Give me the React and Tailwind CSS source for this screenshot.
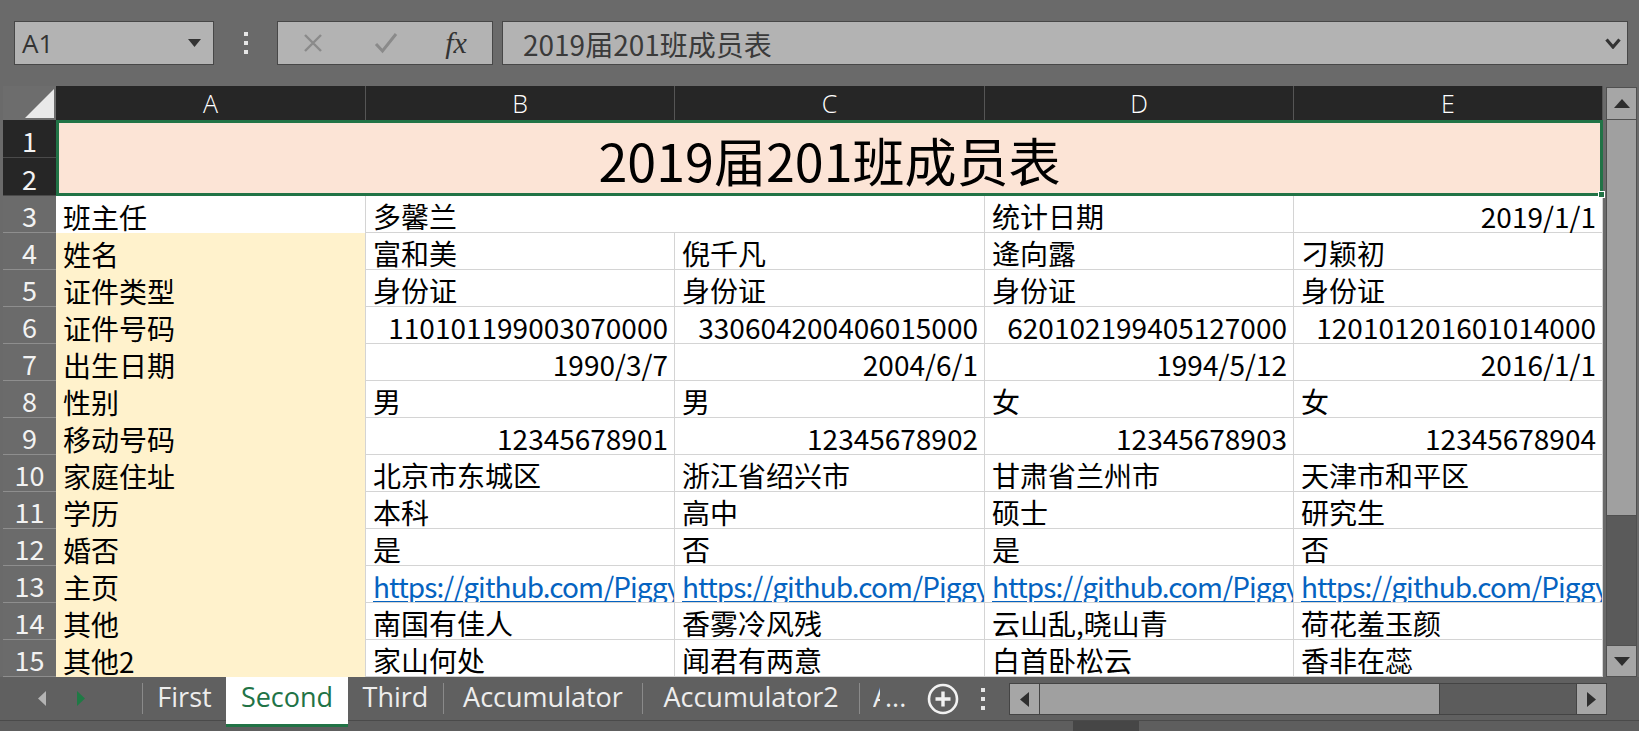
import React from "react";

const cols = ["A", "B", "C", "D", "E"];

const body = [
  { n: 4, label: "姓名", kind: "text", cells: ["富和美", "倪千凡", "逄向露", "刁颖初"] },
  { n: 5, label: "证件类型", kind: "text", cells: ["身份证", "身份证", "身份证", "身份证"] },
  {
    n: 6,
    label: "证件号码",
    kind: "num",
    cells: ["110101199003070000", "330604200406015000", "620102199405127000", "120101201601014000"],
  },
  { n: 7, label: "出生日期", kind: "num", cells: ["1990/3/7", "2004/6/1", "1994/5/12", "2016/1/1"] },
  { n: 8, label: "性别", kind: "text", cells: ["男", "男", "女", "女"] },
  {
    n: 9,
    label: "移动号码",
    kind: "num",
    cells: ["12345678901", "12345678902", "12345678903", "12345678904"],
  },
  {
    n: 10,
    label: "家庭住址",
    kind: "text",
    cells: ["北京市东城区", "浙江省绍兴市", "甘肃省兰州市", "天津市和平区"],
  },
  { n: 11, label: "学历", kind: "text", cells: ["本科", "高中", "硕士", "研究生"] },
  { n: 12, label: "婚否", kind: "text", cells: ["是", "否", "是", "否"] },
  {
    n: 13,
    label: "主页",
    kind: "link",
    cells: [
      "https://github.com/Piggy",
      "https://github.com/Piggy",
      "https://github.com/Piggy",
      "https://github.com/Piggy",
    ],
  },
  { n: 14, label: "其他", kind: "text", cells: ["南国有佳人", "香雾冷风残", "云山乱,晓山青", "荷花羞玉颜"] },
  { n: 15, label: "其他2", kind: "text", cells: ["家山何处", "闻君有两意", "白首卧松云", "香非在蕊"] },
];

function RowHead({ n, dark }) {
  return (
    <div
      className={
        dark
          ? "flex items-center justify-center pt-[3px] bg-[#262626] border-b border-[#4a4a4a] text-[27px] leading-none text-[#f2f2f2]"
          : "flex items-center justify-center pt-[3px] bg-[#6b6b6b] border-b border-[#8e8e8e] text-[27px] leading-none text-[#f2f2f2]"
      }
    >
      {n}
    </div>
  );
}

function Cell({ kind, children }) {
  if (kind === "num") {
    return (
      <div className="flex items-center justify-end pt-[4px] px-[6px] whitespace-nowrap bg-white border-r border-b border-[#d4d4d4] text-[28px] leading-none text-black">
        {children}
      </div>
    );
  }
  if (kind === "link") {
    return (
      <div className="flex items-center pt-[4px] pl-[7px] overflow-hidden whitespace-nowrap bg-white border-r border-b border-[#d4d4d4] text-[28px] leading-none tracking-[-0.9px] text-[#0563c1] underline underline-offset-[3px] decoration-[1.5px]">
        {children}
      </div>
    );
  }
  return (
    <div className="flex items-center pt-[4px] pl-[7px] whitespace-nowrap bg-white border-r border-b border-[#d4d4d4] text-[28px] leading-none text-black">
      {children}
    </div>
  );
}

function LabelCell({ white, children }) {
  return (
    <div
      className={
        white
          ? "flex items-center pt-[4px] pl-[7px] whitespace-nowrap bg-white border-r border-[#d4d4d4] text-[28px] leading-none text-black"
          : "flex items-center pt-[4px] pl-[7px] whitespace-nowrap bg-[#fff2cc] border-r border-[#d4d4d4] text-[28px] leading-none text-black"
      }
    >
      {children}
    </div>
  );
}

function Tab({ w, active, children }) {
  if (active) {
    return (
      <div
        className="relative z-10 shrink-0 h-[50px] bg-white border-b-[3px] border-[#217346] flex items-start justify-center pt-[6px] text-[27px] leading-none text-[#217346]"
        style={{ width: w }}
      >
        {children}
      </div>
    );
  }
  return (
    <div
      className="shrink-0 h-[43px] flex items-start justify-center pt-[6px] text-[27px] leading-none text-[#ededed]"
      style={{ width: w }}
    >
      {children}
    </div>
  );
}

function TabSep() {
  return <div className="shrink-0 w-px h-[31px] mt-[6px] bg-[#8a8a8a]" />;
}

export default function App() {
  return (
    <div className="w-[1639px] h-[731px] bg-[#6a6a6a] flex flex-col overflow-hidden font-['Noto_Sans_CJK_SC',sans-serif]">
      {/* formula bar */}
      <div className="h-[86px] shrink-0 flex items-start pt-[21px] pl-[14px]">
        <div className="w-[200px] h-[44px] bg-[#b3b3b3] border border-[#474747] flex items-center justify-between pl-[7px] pr-[12px]">
          <span className="font-['Open_Sans',sans-serif] text-[26px] leading-none text-[#333]">A1</span>
          <svg width="13" height="8" viewBox="0 0 13 8">
            <path d="M0 0 H13 L6.5 8 Z" fill="#333" />
          </svg>
        </div>
        <div className="w-[63px] h-[44px] flex items-center justify-center">
          <svg width="6" height="24" viewBox="0 0 6 24">
            <rect x="1" y="1" width="4" height="4" fill="#e6e6e6" />
            <rect x="1" y="10" width="4" height="4" fill="#e6e6e6" />
            <rect x="1" y="19" width="4" height="4" fill="#e6e6e6" />
          </svg>
        </div>
        <div className="w-[216px] h-[44px] bg-[#b3b3b3] border border-[#474747] flex items-center">
          <div className="w-[70px] flex justify-center">
            <svg width="20" height="20" viewBox="0 0 20 20">
              <path d="M2 2 L18 18 M18 2 L2 18" stroke="#8a8a8a" strokeWidth="2.4" />
            </svg>
          </div>
          <div className="w-[76px] flex justify-center">
            <svg width="24" height="22" viewBox="0 0 24 22">
              <path d="M2 12 L8.5 19 L22 2" stroke="#8a8a8a" strokeWidth="3" fill="none" />
            </svg>
          </div>
          <div className="w-[64px] flex justify-center font-['Liberation_Serif',serif] italic text-[30px] leading-none text-[#333]">
            fx
          </div>
        </div>
        <div className="ml-[9px] w-[1126px] h-[44px] bg-[#b3b3b3] border border-[#474747] flex items-center justify-between pl-[20px] pr-[6px]">
          <span className="text-[28px] leading-none text-[#3a3a3a] pt-[2px]">2019届201班成员表</span>
          <svg width="16" height="11" viewBox="0 0 16 11">
            <path d="M1.5 1.5 L8 9 L14.5 1.5" stroke="#333" strokeWidth="3.2" fill="none" />
          </svg>
        </div>
      </div>

      {/* sheet area */}
      <div className="h-[591px] shrink-0 flex">
        <div className="pl-[3px] bg-[#6a6a6a]">
          <div className="grid grid-cols-[53px_310px_309px_310px_309px_309px] grid-rows-[34px_38px_38px_repeat(13,37px)]">
            {/* column headers */}
            <div className="relative bg-[#6d6d6d]">
              <svg className="absolute right-[2px] bottom-[2px]" width="29" height="29" viewBox="0 0 29 29">
                <path d="M29 0 L29 29 L0 29 Z" fill="#e9e9e9" />
              </svg>
            </div>
            {cols.map((c) => (
              <div
                key={c}
                className="flex items-center justify-center bg-[#262626] border-r border-[#555] font-['Open_Sans',sans-serif] font-light text-[25px] leading-none text-white"
              >
                {c}
              </div>
            ))}

            {/* row 1-2: merged title */}
            <RowHead n={1} dark />
            <div className="relative col-span-5 row-span-2 bg-[#fce4d6] border-[3px] border-[#217346] flex items-center justify-center pt-[4px] text-[52px] leading-none text-black">
              2019届201班成员表
              <div className="absolute -right-[5px] -bottom-[5px] w-[7px] h-[7px] bg-[#217346] border border-white" />
            </div>
            <RowHead n={2} dark />

            {/* row 3 */}
            <RowHead n={3} />
            <LabelCell white>班主任</LabelCell>
            <div className="col-span-2 flex items-center pt-[4px] pl-[7px] bg-white border-r border-b border-[#d4d4d4] text-[28px] leading-none text-black">
              多馨兰
            </div>
            <Cell kind="text">统计日期</Cell>
            <Cell kind="num">2019/1/1</Cell>

            {body.map((r) => (
              <React.Fragment key={r.n}>
                <RowHead n={r.n} />
                <LabelCell>{r.label}</LabelCell>
                {r.cells.map((v, i) => (
                  <Cell key={i} kind={r.kind}>
                    {v}
                  </Cell>
                ))}
              </React.Fragment>
            ))}
          </div>
        </div>

        {/* vertical scrollbar */}
        <div className="w-[36px] flex flex-col pl-[3px] pr-[2px] bg-[#6a6a6a]">
          <div className="h-[33px] mt-px bg-[#a6a6a6] border border-[#505050] flex items-center justify-center">
            <svg width="16" height="9" viewBox="0 0 16 9">
              <path d="M0 9 L8 0 L16 9 Z" fill="#2e2e2e" />
            </svg>
          </div>
          <div className="h-[396px] bg-[#a0a0a0] border-x border-b border-[#505050]" />
          <div className="flex-1 bg-[#5a5a5a] border-x border-[#505050]" />
          <div className="h-[32px] bg-[#a6a6a6] border border-[#505050] flex items-center justify-center">
            <svg width="16" height="9" viewBox="0 0 16 9">
              <path d="M0 0 L16 0 L8 9 Z" fill="#2e2e2e" />
            </svg>
          </div>
        </div>
      </div>

      {/* sheet tabs */}
      <div className="h-[43px] shrink-0 flex items-start bg-[#606060] font-['Open_Sans',sans-serif]">
        <div className="w-[142px] h-[43px] shrink-0 flex items-center pl-[38px] gap-[31px]">
          <svg width="8" height="15" viewBox="0 0 8 15">
            <path d="M8 0 L8 15 L0 7.5 Z" fill="#b4b4b4" />
          </svg>
          <svg width="8" height="15" viewBox="0 0 8 15">
            <path d="M0 0 L0 15 L8 7.5 Z" fill="#1f7a45" />
          </svg>
        </div>
        <TabSep />
        <Tab w={83}>First</Tab>
        <Tab w={122} active>
          Second
        </Tab>
        <Tab w={95}>Third</Tab>
        <TabSep />
        <Tab w={198}>Accumulator</Tab>
        <TabSep />
        <Tab w={216}>Accumulator2</Tab>
        <TabSep />
        <div className="w-[66px] h-[43px] shrink-0 flex items-start pt-[6px] pl-[13px] text-[27px] leading-none text-[#ededed]">
          <span className="inline-block w-[7px] overflow-hidden">A</span>
          <span className="ml-[5px]">...</span>
        </div>
        <div className="w-[34px] h-[43px] shrink-0 flex items-center justify-center">
          <svg width="32" height="32" viewBox="0 0 32 32">
            <circle cx="16" cy="16" r="14" stroke="#f2f2f2" strokeWidth="2.6" fill="none" />
            <path d="M16 8.5 V23.5 M8.5 16 H23.5" stroke="#f2f2f2" strokeWidth="3.4" />
          </svg>
        </div>
        <div className="w-[46px] h-[43px] shrink-0 flex items-center justify-center">
          <svg width="6" height="24" viewBox="0 0 6 24">
            <rect x="1" y="1" width="4" height="4" fill="#e6e6e6" />
            <rect x="1" y="10" width="4" height="4" fill="#e6e6e6" />
            <rect x="1" y="19" width="4" height="4" fill="#e6e6e6" />
          </svg>
        </div>
        <div className="ml-[3px] mt-[6px] h-[32px] w-[598px] shrink-0 flex">
          <div className="w-[31px] bg-[#a6a6a6] border border-[#444] flex items-center justify-center">
            <svg width="9" height="15" viewBox="0 0 9 15">
              <path d="M9 0 L9 15 L0 7.5 Z" fill="#2e2e2e" />
            </svg>
          </div>
          <div className="w-[400px] bg-[#a0a0a0] border-y border-r border-[#444]" />
          <div className="flex-1 bg-[#5c5c5c] border-y border-[#444]" />
          <div className="w-[31px] bg-[#a6a6a6] border border-[#444] flex items-center justify-center">
            <svg width="9" height="15" viewBox="0 0 9 15">
              <path d="M0 0 L0 15 L9 7.5 Z" fill="#2e2e2e" />
            </svg>
          </div>
        </div>
      </div>

      {/* status strip */}
      <div className="h-[11px] shrink-0 flex bg-[#5e5e5e] border-t border-[#4a4a4a]">
        <div className="ml-[1073px] w-[66px] bg-[#464646]" />
      </div>
    </div>
  );
}
